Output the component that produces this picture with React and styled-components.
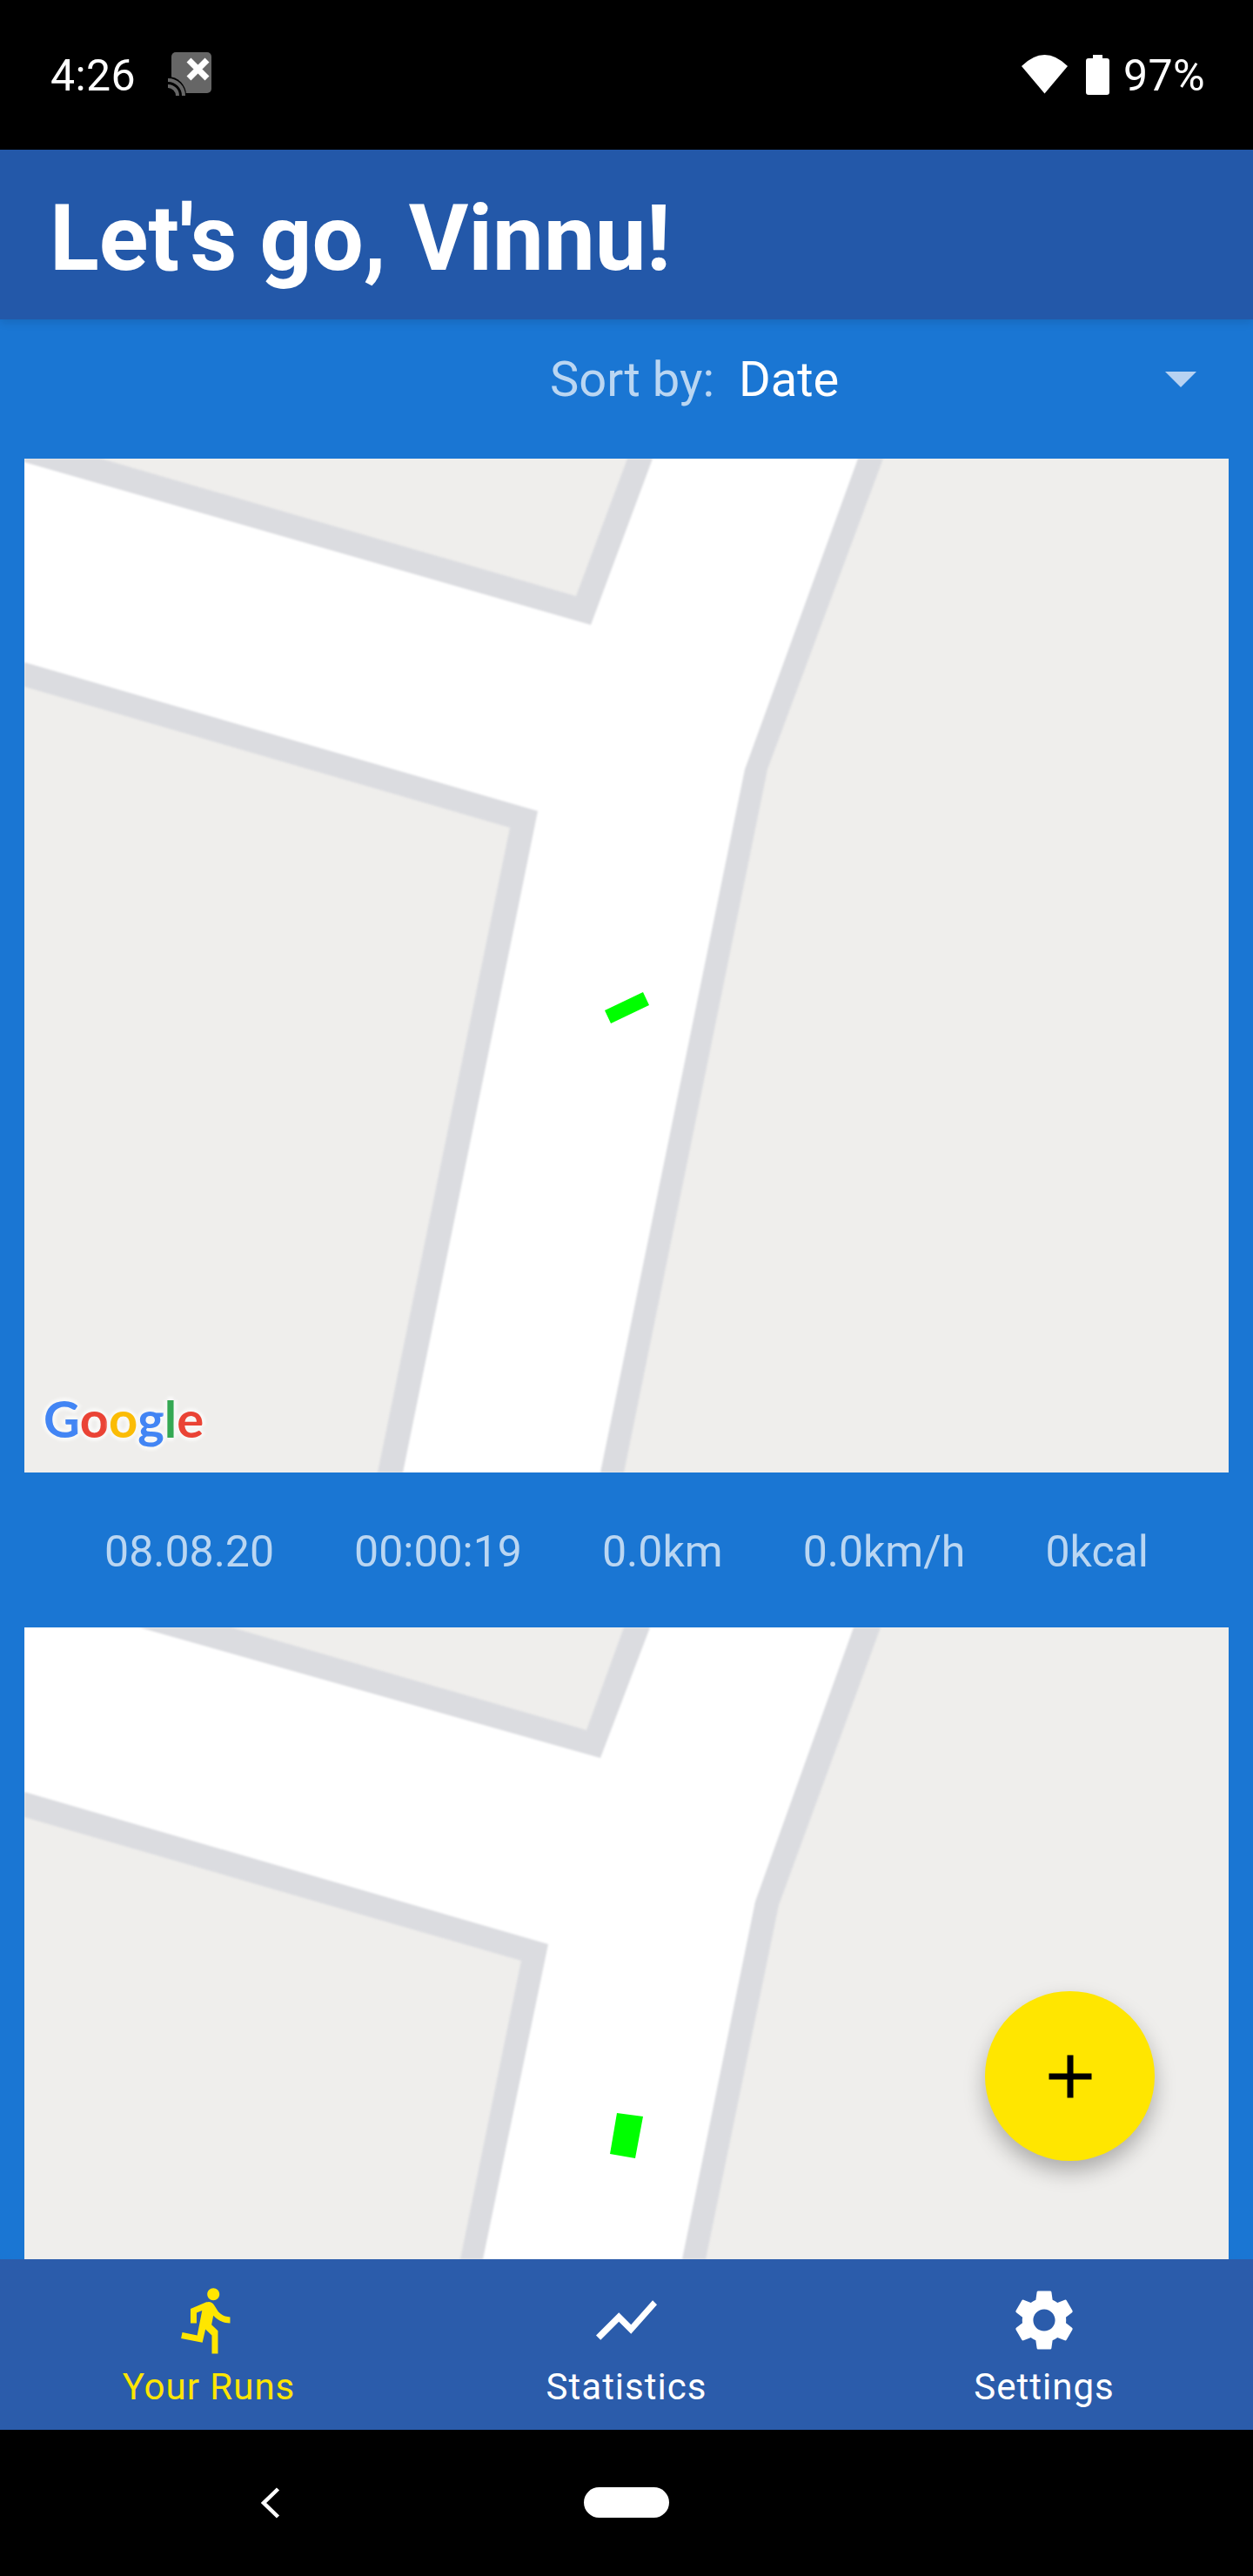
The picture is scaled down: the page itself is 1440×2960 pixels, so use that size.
import { createGlobalStyle, styled } from "styled-components";
import { MdAdd, MdDirectionsRun, MdSettings, MdShowChart } from "react-icons/md";

const GlobalStyle = createGlobalStyle`
  html, body {
    margin: 0;
    padding: 0;
    background: #000;
  }
  * {
    box-sizing: border-box;
  }
`;

const runs = [
  {
    id: 1,
    stats: ["08.08.20", "00:00:19", "0.0km", "0.0km/h", "0kcal"],
    edge: "88,0 634,158 693,0 987,0 854,357 689,1165 406,1165 558,424 0,262 0,0",
    road: "0,4 651,191 722,0 958,0 828,357 662,1165 435,1165 590,405 0,234",
    track: "667,634 711,613 718,628 674,649",
  },
  {
    // only the map of this one is in view, the list is cut off by the bottom nav
    id: 2,
    edge: "238,0 646,118 689,0 984,0 867,319 783,726 501,726 571,383 0,218 0,0",
    road: "132,0 662,150 719,0 953,0 840,315 756,726 527,726 602,364 0,189 0,0",
    track: "681,558 711,562 702,610 673,605",
  },
];

const googleLetters = [
  ["G", "#4285F4"],
  ["o", "#EA4335"],
  ["o", "#FBBC05"],
  ["g", "#4285F4"],
  ["l", "#34A853"],
  ["e", "#EA4335"],
];

function RunCard({ run, showLogo }) {
  return (
    <Card>
      <MapFrame>
        <MapDrawing viewBox="0 0 1384 1165">
          <Roads>
            <polygon points={run.edge} fill="#DBDCE0" />
            <polygon points={run.road} fill="#FFFFFF" />
          </Roads>
          <polygon points={run.track} fill="#00FF00" />
        </MapDrawing>
        {showLogo && (
          <GoogleLogo>
            {googleLetters.map(([letter, color], i) => (
              <GoogleLetter key={i} $color={color}>
                {letter}
              </GoogleLetter>
            ))}
          </GoogleLogo>
        )}
      </MapFrame>
      {run.stats && (
        <StatsRow>
          {run.stats.map((stat) => (
            <Stat key={stat}>{stat}</Stat>
          ))}
        </StatsRow>
      )}
    </Card>
  );
}

export default function App() {
  return (
    <Phone>
      <GlobalStyle />
      <StatusBar>
        <StatusGroup>
          <StatusText>4:26</StatusText>
          <CastIcon viewBox="0 0 50 50">
            <rect x="4" y="0" width="46" height="47" rx="5" fill="#666" />
            <path d="M0 29a21 21 0 0 1 21 21h-21z" fill="#000" transform="translate(0 -1)" />
            <path d="M0 32a18 18 0 0 1 18 18M0 39a11 11 0 0 1 11 11" fill="none" stroke="#666" strokeWidth="4" />
            <path d="M24 9l21 21M45 9L24 30" stroke="#fff" strokeWidth="7" />
          </CastIcon>
        </StatusGroup>
        <StatusGroup>
          <WifiIcon viewBox="0 0 53 45">
            <path d="M0 13Q26.5 -13 53 13L26.5 44.5Z" fill="#fff" />
          </WifiIcon>
          <BatteryIcon viewBox="0 0 27 46">
            <path d="M8 0h11v4h5a3 3 0 0 1 3 3v36a3 3 0 0 1-3 3H3a3 3 0 0 1-3-3V7a3 3 0 0 1 3-3h5z" fill="#fff" />
          </BatteryIcon>
          <StatusText>97%</StatusText>
        </StatusGroup>
      </StatusBar>

      <Header>
        <Title>Let's go, Vinnu!</Title>
      </Header>

      <Body>
        <SortRow>
          <SortLabel>Sort by:</SortLabel>
          <SortValue>Date</SortValue>
          <SortArrow />
        </SortRow>
        {runs.map((run, i) => (
          <RunCard key={run.id} run={run} showLogo={i === 0} />
        ))}
        <Fab>
          <MdAdd size={84} />
        </Fab>
      </Body>

      <BottomNav>
        <NavItem $active>
          <MdDirectionsRun size={84} />
          <NavLabel>Your Runs</NavLabel>
        </NavItem>
        <NavItem>
          <MdShowChart size={84} />
          <NavLabel>Statistics</NavLabel>
        </NavItem>
        <NavItem>
          <MdSettings size={84} />
          <NavLabel>Settings</NavLabel>
        </NavItem>
      </BottomNav>

      <SystemBar>
        <BackIcon viewBox="0 0 22 36">
          <path d="M19.5 2L3 18l16.5 16" fill="none" stroke="#fff" strokeWidth="4.5" />
        </BackIcon>
        <HomePill />
      </SystemBar>
    </Phone>
  );
}

const Phone = styled.div`
  width: 1440px;
  height: 2960px;
  display: flex;
  flex-direction: column;
  overflow: hidden;
  background: #000;
  font-family: Roboto, "Liberation Sans", sans-serif;
`;

const StatusBar = styled.div`
  height: 172px;
  flex: none;
  display: flex;
  justify-content: space-between;
  align-items: center;
  padding: 0 55px 0 58px;
  background: #000;
`;

const StatusGroup = styled.div`
  display: flex;
  align-items: center;
`;

const StatusText = styled.span`
  color: #fff;
  font-size: 50px;
  line-height: 60px;
  letter-spacing: 0.4px;
  margin-top: 2px;
`;

const CastIcon = styled.svg`
  width: 50px;
  height: 50px;
  margin-left: 37px;
  margin-top: -3px;
`;

const WifiIcon = styled.svg`
  width: 53px;
  height: 45px;
  margin-top: -1px;
`;

const BatteryIcon = styled.svg`
  width: 27px;
  height: 46px;
  margin: -1px 16px 0 21px;
`;

const Header = styled.header`
  height: 195px;
  flex: none;
  display: flex;
  align-items: center;
  padding: 10px 0 0 57px;
  background: #2358a9;
  position: relative;
  z-index: 2;
  box-shadow: 0 3px 10px rgba(0, 0, 0, 0.12);
`;

const Title = styled.h1`
  margin: 0;
  color: #fff;
  font-size: 105px;
  line-height: 120px;
  font-weight: 700;
`;

const Body = styled.main`
  flex: 1;
  min-height: 0;
  position: relative;
  overflow: hidden;
  background: #1a76d3;
`;

const SortRow = styled.div`
  height: 160px;
  display: flex;
  align-items: center;
  padding: 0 65px 22px 632px;
  font-size: 56px;
`;

const SortLabel = styled.span`
  color: rgba(255, 255, 255, 0.7);
`;

const SortValue = styled.span`
  color: #fff;
  margin-left: 28px;
`;

const SortArrow = styled.span`
  margin-left: auto;
  width: 0;
  height: 0;
  border-left: 18px solid transparent;
  border-right: 18px solid transparent;
  border-top: 18px solid #b7d2f2;
`;

const Card = styled.section`
  padding: 0 28px;
`;

const MapFrame = styled.div`
  position: relative;
  height: 1165px;
  background: #efeeec;
`;

const MapDrawing = styled.svg`
  display: block;
  width: 1384px;
  height: 1165px;
`;

const Roads = styled.g`
  filter: blur(0.8px);
`;

const GoogleLogo = styled.div`
  position: absolute;
  left: 22px;
  bottom: 24px;
  font-family: Lato, sans-serif;
  font-size: 58px;
  line-height: 76px;
  font-weight: 700;
  text-shadow: 4px 0 3px #f8f8f7, -4px 0 3px #f8f8f7, 0 4px 3px #f8f8f7, 0 -4px 3px #f8f8f7;
`;

const GoogleLetter = styled.span`
  color: ${(props) => props.$color};
`;

const StatsRow = styled.div`
  height: 178px;
  display: flex;
  justify-content: space-evenly;
  align-items: center;
  padding-top: 4px;
`;

const Stat = styled.span`
  color: rgba(255, 255, 255, 0.7);
  font-size: 50px;
`;

const Fab = styled.button`
  position: absolute;
  right: 113px;
  bottom: 113px;
  width: 195px;
  height: 195px;
  border: none;
  border-radius: 50%;
  padding: 0;
  display: flex;
  align-items: center;
  justify-content: center;
  color: #000;
  background: #ffe600;
  box-shadow: 0 12px 24px rgba(0, 0, 0, 0.28);
`;

const BottomNav = styled.nav`
  height: 196px;
  flex: none;
  display: grid;
  grid-template-columns: repeat(3, 1fr);
  background: #2b5cab;
`;

const NavItem = styled.div`
  display: flex;
  flex-direction: column;
  align-items: center;
  padding-top: 28px;
  color: ${(props) => (props.$active ? "#ffe600" : "#fff")};
`;

const NavLabel = styled.span`
  margin-top: 7px;
  font-size: 42px;
  line-height: 56px;
  letter-spacing: 1px;
`;

const SystemBar = styled.div`
  height: 168px;
  flex: none;
  display: grid;
  grid-template-columns: 1fr auto 1fr;
  align-items: center;
  padding-bottom: 1px;
  background: #000;
`;

const BackIcon = styled.svg`
  width: 22px;
  height: 36px;
  justify-self: end;
  margin-right: 349px;
`;

const HomePill = styled.div`
  width: 98px;
  height: 35px;
  border-radius: 18px;
  background: #fff;
`;
